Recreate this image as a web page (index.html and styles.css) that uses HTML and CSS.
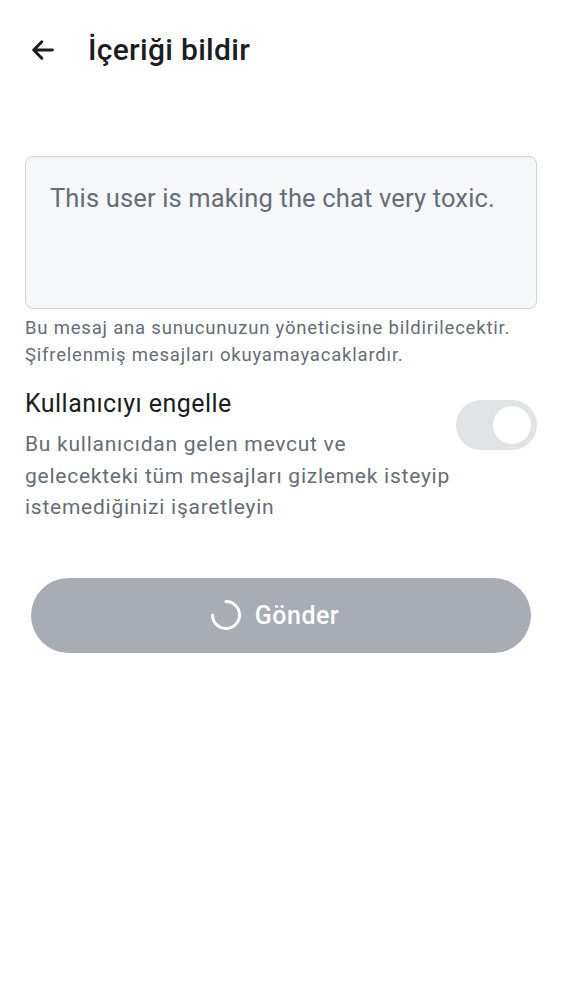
FILE: index.html
```html
<!DOCTYPE html>
<html lang="tr">
<head>
<meta charset="utf-8">
<link rel="stylesheet" href="styles.css">
</head>
<body>
<div class="screen">
  <header class="topbar">
    <button class="back" aria-label="Geri">
      <svg width="30" height="30" viewBox="0 0 24 24"><path d="M19.5 12H4.8M11 5.5L4.5 12l6.5 6.5" fill="none" stroke="#1b1d22" stroke-width="2.3" stroke-linecap="round" stroke-linejoin="round"/></svg>
    </button>
    <h1 class="title">İçeriği bildir</h1>
  </header>

  <main class="content">
    <div class="field">
      <div class="textarea">This user is making the chat very toxic.</div>
      <p class="hint">Bu mesaj ana sunucunuzun yöneticisine bildirilecektir. Şifrelenmiş mesajları okuyamayacaklardır.</p>
    </div>

    <div class="block-row">
      <div class="block-text">
        <div class="block-title">Kullanıcıyı engelle</div>
        <div class="block-desc">Bu kullanıcıdan gelen mevcut ve gelecekteki tüm mesajları gizlemek isteyip istemediğinizi işaretleyin</div>
      </div>
      <div class="toggle"><span class="knob"></span></div>
    </div>

    <button class="send">
      <svg class="spinner" width="32" height="32" viewBox="0 0 32 32"><path d="M16 2.5 A13.5 13.5 0 1 1 2.5 16" fill="none" stroke="#ffffff" stroke-width="3" stroke-linecap="round"/></svg>
      <span class="send-label">Gönder</span>
    </button>
  </main>
</div>
</body>
</html>
```

FILE: styles.css
```css
* { box-sizing: border-box; }
html, body { margin: 0; padding: 0; background: #ffffff; }
body { font-family: Roboto, "Noto Sans", sans-serif; color: #1b1d22; }

.screen { width: 562px; min-height: 1000px; background: #fff; }

.topbar {
  display: flex;
  align-items: center;
  height: 100px;
  padding: 0 0 0 28px;
}
.back {
  border: 0;
  background: none;
  padding: 0;
  width: 30px;
  height: 30px;
  display: flex;
  align-items: center;
  justify-content: center;
  margin-right: 30px;
}
.title {
  margin: 0;
  font-size: 30px;
  line-height: 36px;
  font-weight: 500;
  color: #1b1d22;
  letter-spacing: 0.3px;
}

.content { padding: 56px 25px 0 25px; }

.field { display: flex; flex-direction: column; }
.textarea {
  height: 153px;
  border: 1px solid #cdd3da;
  border-radius: 8px;
  background: #f6f7f9;
  padding: 26px 24px;
  font-size: 25.5px;
  line-height: 30px;
  color: #656d77;
  letter-spacing: 0.15px;
}
.hint {
  margin: 6px 0 0 0;
  font-size: 18.5px;
  line-height: 27px;
  color: #656d77;
  letter-spacing: 0.8px;
}

.block-row {
  display: flex;
  align-items: flex-start;
  justify-content: space-between;
  margin-top: 19px;
}
.block-text { width: 430px; }
.block-title {
  font-size: 25px;
  line-height: 32px;
  color: #1b1d22;
  letter-spacing: 0.45px;
}
.block-desc {
  margin-top: 9px;
  font-size: 21px;
  line-height: 31.5px;
  color: #656d77;
  letter-spacing: 0.75px;
}
.toggle {
  width: 81px;
  height: 50px;
  border-radius: 25px;
  background: #e1e3e5;
  display: flex;
  align-items: center;
  justify-content: flex-end;
  padding-right: 6px;
  margin-top: 12px;
}
.knob {
  width: 38px;
  height: 38px;
  border-radius: 50%;
  background: #ffffff;
}

.send {
  display: flex;
  align-items: center;
  justify-content: center;
  gap: 13px;
  width: 500px;
  height: 75px;
  margin: 54px 0 0 6px;
  border: 0;
  border-radius: 38px;
  background: #a7acb5;
  color: #ffffff;
  font-family: Roboto, "Noto Sans", sans-serif;
  font-size: 25px;
  font-weight: 500;
  letter-spacing: 0.5px;
  padding: 0;
}
.send-label { margin-right: 13px; }
.spinner { display: block; }
```
